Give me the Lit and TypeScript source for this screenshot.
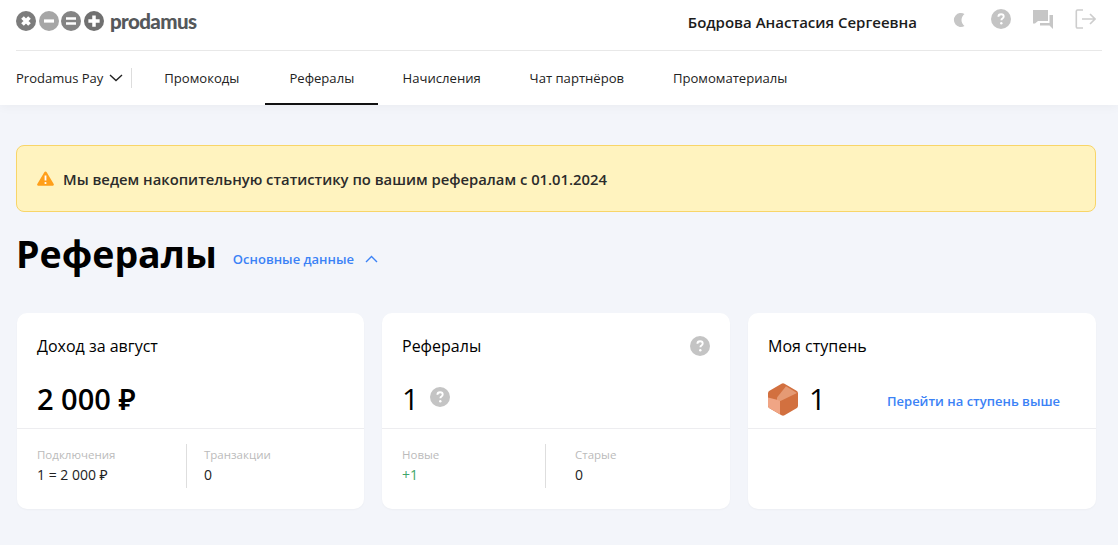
import { LitElement, html, css, svg } from 'lit';
import { customElement } from 'lit/decorators.js';

const question = (size: number) => html`
    <svg width=${size} height=${size} viewBox="0 0 20 20">
        <circle cx="10" cy="10" r="10" fill="#c4c4c4"></circle>
        <path d="M7.400 7.800c0-1.600 1.100-2.500 2.700-2.500s2.600.9 2.600 2.200c0 1-.5 1.500-1.300 2.100-.7.5-1 .8-1 1.600" fill="none" stroke="#fff" stroke-width="1.900"></path>
        <circle cx="10.300" cy="14.200" r="1.200" fill="#fff"></circle>
    </svg>
`;

const logoMarks = [
    { fill: '#7c7c7c', mark: svg`<path d="M5.200 5.200l5.600 5.600M10.800 5.200l-5.600 5.600" stroke="#fff" stroke-width="3"/>` },
    { fill: '#a6a6a6', mark: svg`<path d="M4 8h8" stroke="#fff" stroke-width="2.600"/>` },
    { fill: '#848484', mark: svg`<path d="M4 6h8M4 10h8" stroke="#fff" stroke-width="2"/>` },
    { fill: '#707070', mark: svg`<path d="M3.500 8h9M8 3.500v9" stroke="#fff" stroke-width="2.800"/>` }
];

@customElement('app-root')
export class AppRoot extends LitElement {
    static styles = css`
        :host {
            display: block;
            min-height: 545px;
            background: #f3f5fa;
            font-family: "Open Sans", "Noto Sans", sans-serif;
            color: #000;
            overflow: hidden;
        }
        .header {
            background: #fff;
            padding: 0 16px;
            height: 105px;
            box-shadow: 0 2px 10px rgba(0, 0, 0, 0.04);
        }
        .top {
            display: flex;
            align-items: center;
            justify-content: space-between;
            height: 51px;
            padding-bottom: 8px;
            box-sizing: border-box;
            border-bottom: 1px solid #e8e8e8;
        }
        .logo {
            display: flex;
            align-items: center;
            gap: 2.5px;
        }
        .logo svg {
            display: block;
        }
        .logo-text {
            margin-left: 4px;
            font-family: "Lato", sans-serif;
            font-size: 20.5px;
            line-height: 20px;
            font-weight: 900;
            letter-spacing: -0.6px;
            color: #55585b;
        }
        .user {
            display: flex;
            align-items: center;
            padding-right: 6px;
        }
        .user-name {
            font-size: 15px;
            font-weight: 600;
            color: #1c1c1c;
            margin: 2px 35px 0 0;
        }
        .icons {
            display: flex;
            align-items: center;
            gap: 21px;
            margin-top: -4px;
        }
        .icons svg {
            display: block;
        }
        .nav {
            display: flex;
            align-items: stretch;
            height: 54px;
            font-size: 13.1px;
            color: #222;
        }
        .product {
            display: flex;
            align-items: center;
            gap: 6px;
            padding-right: 8px;
            font-size: 13px;
        }
        .product-sep {
            width: 1px;
            height: 20px;
            background: #ddd;
            align-self: center;
            margin-right: 8px;
        }
        .tab {
            display: flex;
            align-items: center;
            padding: 0 24.4px;
            white-space: nowrap;
        }
        .tab.first {
            padding: 0 26px 0 24px;
        }
        .tab.active {
            border-bottom: 2px solid #111;
            box-sizing: border-box;
            padding: 2px 24px 0;
        }
        .content {
            padding: 40px 22px 0 16px;
        }
        .alert {
            display: flex;
            align-items: center;
            gap: 9px;
            height: 67px;
            box-sizing: border-box;
            padding-left: 20px;
            background: #fff3bf;
            border: 1px solid #f8d568;
            border-radius: 8px;
            font-size: 14.8px;
            font-weight: 600;
            color: #2b2b2b;
        }
        .heading {
            display: flex;
            align-items: center;
            margin-top: 13px;
            height: 58px;
        }
        h1 {
            margin: 0;
            font-size: 37.5px;
            line-height: 58px;
            font-weight: 700;
        }
        .toggle {
            display: flex;
            align-items: center;
            gap: 11px;
            margin: 9px 0 0 16px;
            font-size: 13px;
            font-weight: 600;
            color: #3b82f6;
        }
        .cards {
            display: grid;
            grid-template-columns: 347px 348px 348px;
            gap: 18px;
            margin: 30px 0 0 1px;
        }
        .card {
            height: 196px;
            background: #fff;
            border-radius: 10px;
            box-shadow: 0 1px 2px rgba(0, 0, 0, 0.03);
            display: flex;
            flex-direction: column;
        }
        .card-main {
            height: 116px;
            box-sizing: border-box;
            padding: 21px 20px 0;
            border-bottom: 1px solid #ededf0;
        }
        .card-title {
            display: flex;
            align-items: center;
            justify-content: space-between;
            height: 24px;
            font-size: 16px;
            line-height: 24px;
        }
        .value {
            display: flex;
            align-items: center;
            margin-top: 22px;
            height: 38px;
            font-size: 29.5px;
            font-weight: 500;
            line-height: 38px;
        }
        .value.money {
            font-size: 29px;
            font-weight: 600;
        }
        .value .hint {
            margin: 0 0 6px 11px;
            display: block;
        }
        .hex {
            display: block;
            margin-right: 11px;
        }
        .up {
            margin-left: auto;
            margin-right: 16px;
            margin-top: 4px;
            font-size: 13px;
            font-weight: 600;
            color: #3b82f6;
        }
        .foot {
            display: grid;
            padding: 15px 20px 0;
            height: 44px;
        }
        .foot-cell {
            font-size: 14px;
            line-height: 20px;
            padding-top: 1px;
        }
        .foot-cell + .foot-cell {
            border-left: 1px solid #dedede;
        }
        .foot-label {
            font-size: 11.5px;
            color: #bbb;
        }
        .foot-value {
            color: #222;
        }
        .green {
            color: #3fa66a;
        }
    `;

    private renderFoot(columns: string, padLeft: string, a: string, aValue: string, b: string, bValue: string, green = false) {
        return html`
            <div class="foot" style="grid-template-columns: ${columns}">
                <div class="foot-cell">
                    <div class="foot-label">${a}</div>
                    <div class="foot-value ${green ? 'green' : ''}">${aValue}</div>
                </div>
                <div class="foot-cell" style="padding-left: ${padLeft}">
                    <div class="foot-label">${b}</div>
                    <div class="foot-value">${bValue}</div>
                </div>
            </div>
        `;
    }

    render() {
        return html`
            <div class="header">
                <div class="top">
                    <div class="logo">
                        ${logoMarks.map(item => html`
                            <svg width="20" height="20" viewBox="0 0 16 16">
                                <circle cx="8" cy="8" r="8" fill=${item.fill}></circle>
                                ${item.mark}
                            </svg>
                        `)}
                        <span class="logo-text">prodamus</span>
                    </div>
                    <div class="user">
                        <span class="user-name">Бодрова Анастасия Сергеевна</span>
                        <div class="icons">
                            <svg width="18" height="20" viewBox="0 0 18 20">
                                <path d="M12.500 5A7 7 0 1 0 12.500 17 7.500 7.500 0 0 1 12.500 5z" fill="#c6c6c6"></path>
                            </svg>
                            ${question(20)}
                            <svg width="22" height="20" viewBox="0 0 22 20">
                                <path d="M1 1h15v11H6l-3 2.500H1z" fill="#c6c6c6"></path>
                                <path d="M17.500 6H21v14l-3.500-3.500H8V14h9.500z" fill="#c6c6c6"></path>
                            </svg>
                            <svg width="21" height="20" viewBox="0 0 21 20" fill="none" stroke="#cdcdcd" stroke-width="1.600">
                                <path d="M8 1H2.500A1.200 1.200 0 0 0 1.300 2.200v15.600A1.200 1.200 0 0 0 2.500 19H8"></path>
                                <path d="M7 10h13M15 5l5 5-5 5"></path>
                            </svg>
                        </div>
                    </div>
                </div>
                <nav class="nav">
                    <div class="product">
                        Prodamus Pay
                        <svg width="14" height="8" viewBox="0 0 14 8" fill="none" stroke="#222" stroke-width="1.400">
                            <path d="M1 1l6 5.500L13 1"></path>
                        </svg>
                    </div>
                    <div class="product-sep"></div>
                    <div class="tab first">Промокоды</div>
                    <div class="tab active">Рефералы</div>
                    <div class="tab">Начисления</div>
                    <div class="tab">Чат партнёров</div>
                    <div class="tab">Промоматериалы</div>
                </nav>
            </div>
            <div class="content">
                <div class="alert">
                    <svg width="17" height="15" viewBox="0 0 17 15">
                        <path d="M8.500 0.500c.5 0 .9.3 1.200.8l7 11.600c.5.9-.1 1.900-1.100 1.900H1.400c-1 0-1.600-1-1.100-1.900l7-11.600c.3-.5.7-.8 1.200-.8z" fill="#ff9f1a"></path>
                        <path d="M8.500 4.500v5" stroke="#fff" stroke-width="1.800"></path>
                        <circle cx="8.500" cy="12" r="1.100" fill="#fff"></circle>
                    </svg>
                    Мы ведем накопительную статистику по вашим рефералам с 01.01.2024
                </div>
                <div class="heading">
                    <h1>Рефералы</h1>
                    <div class="toggle">
                        Основные данные
                        <svg width="13" height="8" viewBox="0 0 13 8" fill="none" stroke="#3b82f6" stroke-width="1.400">
                            <path d="M1 7l5.500-5.500L12 7"></path>
                        </svg>
                    </div>
                </div>
                <div class="cards">
                    <div class="card">
                        <div class="card-main">
                            <div class="card-title">Доход за август</div>
                            <div class="value money">2 000 ₽</div>
                        </div>
                        ${this.renderFoot('149px 1fr', '17px', 'Подключения', '1 = 2 000 ₽', 'Транзакции', '0')}
                    </div>
                    <div class="card">
                        <div class="card-main">
                            <div class="card-title">Рефералы ${question(20)}</div>
                            <div class="value">1 <span class="hint">${question(20)}</span></div>
                        </div>
                        ${this.renderFoot('143px 1fr', '29px', 'Новые', '+1', 'Старые', '0', true)}
                    </div>
                    <div class="card">
                        <div class="card-main">
                            <div class="card-title">Моя ступень</div>
                            <div class="value">
                                <svg class="hex" width="30" height="33" viewBox="0 0 30 33">
                                    <path d="M13.500.8a3 3 0 0 1 3 0L28.500 7.700a3 3 0 0 1 1.500 2.600V22.700a3 3 0 0 1-1.500 2.600L16.500 32.200a3 3 0 0 1-3 0L1.500 25.300A3 3 0 0 1 0 22.700V10.300a3 3 0 0 1 1.500-2.600z" fill="#d2703f"></path>
                                    <path d="M18 3.300L29 10 12.500 18H9V14.500z" fill="#e59a74"></path>
                                    <path d="M0 14.500L9 16.700 12 18V31.300L1.500 25.300A3 3 0 0 1 0 22.700z" fill="#f0a585"></path>
                                </svg>
                                1
                                <span class="up">Перейти на ступень выше</span>
                            </div>
                        </div>
                    </div>
                </div>
            </div>
        `;
    }
}
